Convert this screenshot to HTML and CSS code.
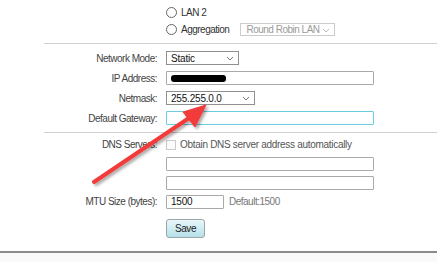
FILE: index.html
```html
<!DOCTYPE html>
<html lang="en">
<head>
    <meta charset="UTF-8">
    <title>WAN Settings</title>
    <link rel="stylesheet" href="styles.css">
</head>
<body>
    <div class="page">
        <div class="section top">
            <div class="row">
                <span class="label"></span>
                <span class="radio"></span>
                <span class="opt">LAN 2</span>
            </div>
            <div class="row">
                <span class="label"></span>
                <span class="radio"></span>
                <span class="opt">Aggregation</span>
                <span class="select disabled agg">Round Robin LAN
                    <svg class="chev" width="8" height="5" viewBox="0 0 8 5"><polyline points="1,1 4,4 7,1" fill="none" stroke="#bbb" stroke-width="1"/></svg>
                </span>
            </div>
        </div>
        <hr class="rule">
        <div class="section ip">
            <div class="row">
                <span class="label">Network Mode:</span>
                <span class="select mode">Static
                    <svg class="chev" width="8" height="5" viewBox="0 0 8 5"><polyline points="1,1 4,4 7,1" fill="none" stroke="#777" stroke-width="1"/></svg>
                </span>
            </div>
            <div class="row">
                <span class="label">IP Address:</span>
                <span class="input wide"><span class="redact"></span></span>
            </div>
            <div class="row">
                <span class="label">Netmask:</span>
                <span class="select mask">255.255.0.0
                    <svg class="chev" width="8" height="5" viewBox="0 0 8 5"><polyline points="1,1 4,4 7,1" fill="none" stroke="#777" stroke-width="1"/></svg>
                </span>
            </div>
            <div class="row">
                <span class="label">Default Gateway:</span>
                <span class="input wide focus"></span>
            </div>
        </div>
        <hr class="rule">
        <div class="section dns">
            <div class="row">
                <span class="label">DNS Servers:</span>
                <span class="check"></span>
                <span class="opt muted">Obtain DNS server address automatically</span>
            </div>
            <div class="row">
                <span class="label"></span>
                <span class="input wide"></span>
            </div>
            <div class="row">
                <span class="label"></span>
                <span class="input wide"></span>
            </div>
            <div class="row">
                <span class="label">MTU Size (bytes):</span>
                <span class="input mtu">1500</span>
                <span class="hint">Default:1500</span>
            </div>
            <div class="row save-row">
                <span class="label"></span>
                <button class="save">Save</button>
            </div>
        </div>
        <div class="footer"></div>

        <svg class="arrow" width="437" height="262" viewBox="0 0 437 262">
            <defs>
                <filter id="shade" x="-20%" y="-20%" width="140%" height="140%">
                    <feDropShadow dx="2" dy="2" stdDeviation="1.5" flood-color="#000" flood-opacity="0.35"/>
                </filter>
            </defs>
            <g filter="url(#shade)" fill="#f23a3a" stroke="#f23a3a">
                <line x1="94" y1="182" x2="192" y2="116" stroke-width="4" stroke-linecap="round"/>
                <polygon points="206,105 183,112 195,127" stroke-width="1" stroke-linejoin="round"/>
            </g>
        </svg>
    </div>
</body>
</html>
```

FILE: styles.css
```css
body {
    margin: 0;
    background: #ffffff;
    font-family: "Liberation Sans", Arial, sans-serif;
    font-size: 10px;
    letter-spacing: -0.5px;
    color: #444444;
}

.page {
    position: relative;
    width: 437px;
    height: 262px;
    overflow: hidden;
}

.section {
    display: flex;
    flex-direction: column;
}

.top {
    padding-top: 4px;
}

.top .row {
    height: 17px;
}

.ip {
    padding-top: 4px;
}

.ip .row {
    height: 20px;
}

.dns {
    padding-top: 2px;
}

.dns .row {
    height: 19px;
}

.dns .save-row {
    height: 30px;
    padding-top: 2px;
}

.row {
    display: flex;
    align-items: center;
}

.label {
    width: 157px;
    flex: none;
    text-align: right;
    margin-right: 9px;
    color: #444444;
}

.rule {
    margin: 5px 0 0 44px;
    border: none;
    border-top: 1px solid #cfcfcf;
    height: 0;
}

.section.ip + .rule {
    margin-top: 4px;
}

.radio {
    width: 9px;
    height: 9px;
    border: 1px solid #666666;
    border-radius: 50%;
    background: #ffffff;
    flex: none;
}

.opt {
    margin-left: 4px;
    color: #333333;
}

.opt.muted {
    color: #555555;
    letter-spacing: -0.3px;
}

.select {
    position: relative;
    box-sizing: border-box;
    display: flex;
    align-items: center;
    height: 14px;
    padding-left: 4px;
    border: 1px solid #8f8f8f;
    background: #ffffff;
    color: #111111;
    letter-spacing: -0.2px;
}

.select .chev {
    position: absolute;
    right: 4px;
    top: 4px;
}

.agg {
    margin-left: 11px;
    width: 95px;
    height: 13px;
    border-color: #cccccc;
    color: #9a9a9a;
    padding-left: 5px;
    letter-spacing: -0.5px;
}

.mode {
    width: 73px;
}

.mask {
    width: 89px;
}

.input {
    box-sizing: border-box;
    display: flex;
    align-items: center;
    height: 14px;
    padding-left: 4px;
    border: 1px solid #a9a9a9;
    border-radius: 1px;
    background: #ffffff;
    color: #111111;
    letter-spacing: -0.2px;
}

.wide {
    width: 208px;
}

.focus {
    border-color: #6ccbe0;
}

.redact {
    width: 55px;
    height: 7px;
    background: #000000;
    border-radius: 3px;
}

.mtu {
    width: 58px;
}

.check {
    box-sizing: border-box;
    width: 10px;
    height: 10px;
    border: 1px solid #cccccc;
    background: #fbfbfb;
    flex: none;
}

.hint {
    margin-left: 5px;
    color: #777777;
}

.save {
    width: 39px;
    height: 19px;
    padding: 0;
    border: 1px solid #9aa6aa;
    border-radius: 3px;
    background: linear-gradient(#e9f7fa, #b6e1ea);
    font-family: "Liberation Sans", Arial, sans-serif;
    font-size: 10px;
    letter-spacing: -0.4px;
    color: #222222;
}

.footer {
    margin-top: 8px;
    height: 20px;
    border-top: 2px solid #8c8c8c;
    background: #fafafa;
}

.arrow {
    position: absolute;
    left: 0;
    top: 0;
    pointer-events: none;
}
```
